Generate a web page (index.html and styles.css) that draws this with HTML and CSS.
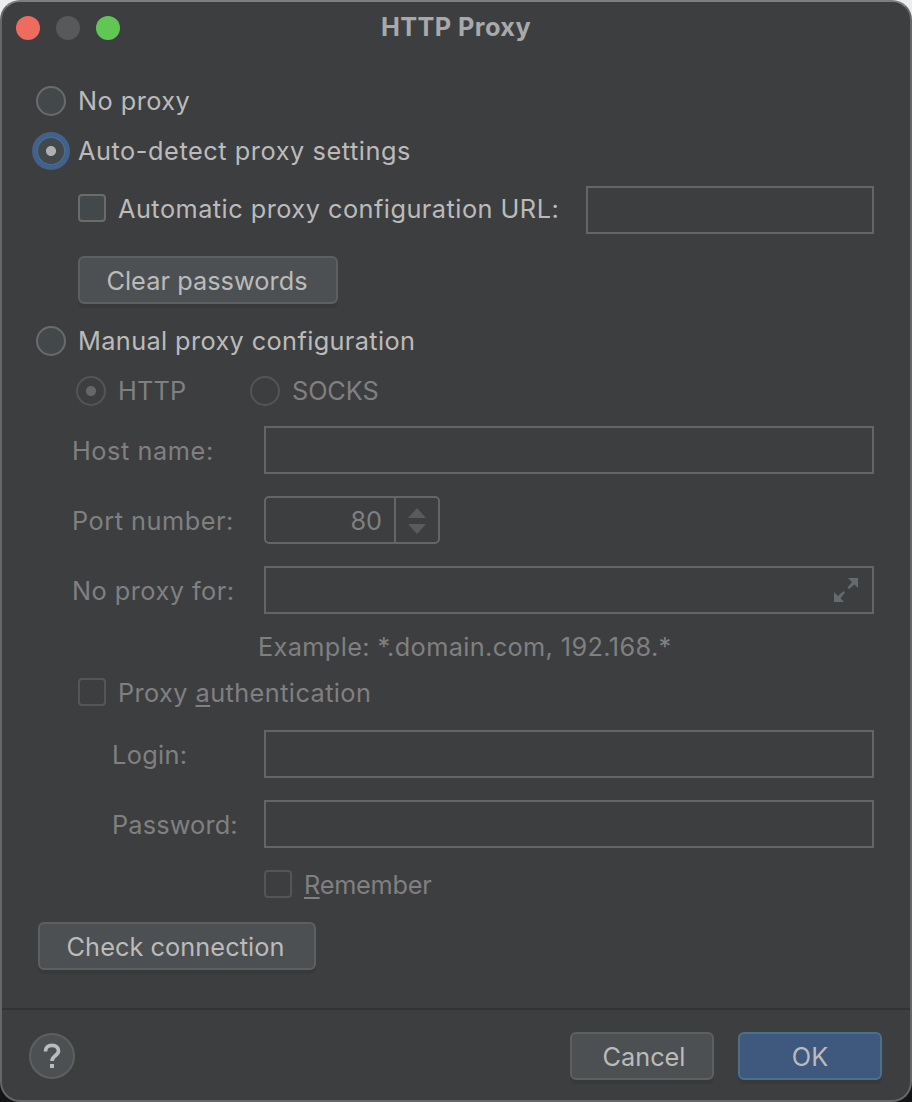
FILE: index.html
```html
<!DOCTYPE html>
<html lang="en">
<head>
<meta charset="utf-8">
<title>HTTP Proxy</title>
<link rel="stylesheet" href="styles.css">
</head>
<body>
<div class="window">
  <header class="titlebar">
    <div class="lights"><i class="light red"></i><i class="light gray"></i><i class="light green"></i></div>
    <h1 class="title">HTTP Proxy</h1>
  </header>
  <main class="content">
    <div class="row h50"><i class="radio"></i><span class="label t-none">No proxy</span></div>
    <div class="row h50"><i class="radio focused"></i><span class="label t-auto">Auto-detect proxy settings</span></div>
    <div class="row h68 indent"><i class="check"></i><span class="label grow t-url">Automatic proxy configuration URL:</span><div class="field url-field"></div></div>
    <div class="row h72 indent"><button class="button clear"><span class="t-clear">Clear passwords</span></button></div>
    <div class="row h50"><i class="radio"></i><span class="label t-manual">Manual proxy configuration</span></div>
    <div class="row h50 indent disabled">
      <div class="option http"><i class="radio selected"></i><span class="label t-http">HTTP</span></div>
      <div class="option"><i class="radio"></i><span class="label t-socks">SOCKS</span></div>
    </div>
    <div class="row h68 form disabled"><span class="label t-host">Host name:</span><div class="field"></div></div>
    <div class="row h72 form disabled"><span class="label t-port">Port number:</span>
      <div class="spinner"><span class="value">80</span><span class="arrows"><svg width="18" height="26" viewBox="0 0 18 26"><path d="M0 10L9 0L18 10ZM0 16H18L9 26Z" fill="#5b5b5c"/></svg></span></div>
    </div>
    <div class="row h68 form disabled"><span class="label t-for">No proxy for:</span>
      <div class="field expand"><svg width="24" height="24" viewBox="0 0 24 24"><path d="M14 0H24V10L20.5 6.5L15 11L13.5 9.5L18 4ZM0 14L4 18L9.500 13L11 14.500L6.500 20L10 24H0Z" fill="#656a6e"/></svg></div>
    </div>
    <div class="row h46 example disabled"><span class="label t-example">Example: *.domain.com, 192.168.*</span></div>
    <div class="row h46 indent disabled"><i class="check"></i><span class="label t-proxyauth">Proxy <u>a</u>uthentication</span></div>
    <div class="row h76 form nested disabled"><span class="label t-login">Login:</span><div class="field"></div></div>
    <div class="row h64 form nested disabled"><span class="label t-pass">Password:</span><div class="field"></div></div>
    <div class="row h56 remember disabled"><i class="check"></i><span class="label t-remember"><u>R</u>emember</span></div>
    <div class="row h68"><button class="button connection"><span class="t-check">Check connection</span></button></div>
  </main>
  <footer class="footer">
    <button class="help" aria-label="Help"><svg width="18" height="26" viewBox="0 0 18 26"><path d="M2.500 8.500C2.500 4.500 5 2.300 9 2.300S15.500 4.500 15.500 8C15.500 12.500 9 12.500 9 18" fill="none" stroke="#bbb" stroke-width="3.700"/><path d="M7 21H11V25H7Z" fill="#bbb"/></svg></button>
    <div class="actions">
      <button class="button action cancel"><span class="t-cancel">Cancel</span></button>
      <button class="button action primary"><span class="t-ok">OK</span></button>
    </div>
  </footer>
</div>
</body>
</html>
```
FILE: styles.css
```css
* { box-sizing: border-box; }
body {
  margin: 0;
  background: linear-gradient(#ededed 0 50%, #151517 50%);
  font-family: Inter, "Liberation Sans", sans-serif;
  font-size: 25.3px;
  color: #bbbbbb;
}
.window {
  width: 912px;
  height: 1102px;
  display: flex;
  flex-direction: column;
  border: 2px solid #666768;
  border-top-color: #7c7e80;
  border-radius: 20px;
  background: #3d3e40;
  overflow: hidden;
}
.titlebar {
  height: 74px;
  flex: none;
  display: grid;
  grid-template-columns: 1fr auto 1fr;
  align-items: start;
  padding: 14px 14px 0;
}
.lights { display: flex; gap: 16px; }
.light { width: 24px; height: 24px; border-radius: 50%; }
.red { background: #ee6b60; }
.gray { background: #58595b; }
.green { background: #62c655; }
.title {
  margin: 0;
  font-size: 25.3px;
  line-height: 22px;
  font-weight: 700;
  letter-spacing: 0.42px;
  color: #a8a9ab;
}
.content { flex: 1; padding: 0 36px 0 34px; }
.row { display: flex; align-items: center; }
.h46 { height: 46px; }
.h50 { height: 50px; }
.h56 { height: 56px; }
.h64 { height: 64px; }
.h68 { height: 68px; }
.h72 { height: 72px; }
.h76 { height: 76px; }
.indent { padding-left: 42px; }
.form { padding-left: 36px; }
.form .label { width: 192px; flex: none; }
.form.nested { padding-left: 76px; }
.form.nested .label { width: 152px; }
.example { padding-left: 222px; }
.remember { padding-left: 228px; }
.grow { flex: 1; }
.disabled { color: #808080; }
.label { white-space: nowrap; line-height: 32px; }
.form .label, .remember .label { padding-top: 2px; }
.label u { text-decoration-thickness: 2px; text-underline-offset: 3px; text-decoration-skip-ink: none; }
.t-none { letter-spacing: 0.45px; }
.t-auto { letter-spacing: 0.56px; }
.t-url { letter-spacing: 0.48px; padding-bottom: 2px; }
.t-clear { letter-spacing: 0.05px; margin-right: 2px; }
.t-manual { letter-spacing: 0.38px; }
.t-http { letter-spacing: 0.15px; }
.t-socks { letter-spacing: -0.1px; }
.t-host { letter-spacing: 0.57px; }
.t-port { letter-spacing: 0.52px; }
.t-for { letter-spacing: 0.48px; }
.t-example { letter-spacing: 0.37px; }
.t-proxyauth { letter-spacing: 0.42px; }
.t-login { letter-spacing: 0.35px; }
.t-pass { letter-spacing: 0.15px; }
.t-remember { letter-spacing: -0.24px; }
.t-check { letter-spacing: 0.06px; margin-right: 3px; }
.t-cancel { margin-left: 4px; }
.value { letter-spacing: 0; }
.option { display: flex; align-items: center; margin-left: -2px; }
.http { width: 174px; }
.option + .option { margin-left: 0; }
.radio {
  width: 30px;
  height: 30px;
  flex: none;
  margin-right: 12px;
  border: 2px solid #6b6b6b;
  border-radius: 50%;
  background: #43494a;
}
.focused {
  border: 2px solid #466a97;
  box-shadow: 0 0 0 4px #43618b;
  background: radial-gradient(circle, #afb0b0 4.6px, #43494a 5.4px);
}
.disabled .radio { background: none; border-color: #545556; }
.disabled .selected { background: radial-gradient(circle, #666767 4.6px, transparent 5.4px); }
.check {
  width: 28px;
  height: 28px;
  flex: none;
  margin: -4px 12px 0 0;
  border: 2px solid #6b6b6b;
  border-radius: 4px;
  background: #43494a;
}
.disabled .check { background: none; border-color: #545556; margin-top: -2px; }
.remember .check { margin-top: 0; }
.field { flex: 1; height: 48px; border: 2px solid #646566; }
.url-field { flex: none; width: 288px; }
.expand { display: flex; align-items: center; justify-content: flex-end; padding-right: 14px; }
.spinner {
  width: 176px;
  height: 48px;
  display: flex;
  border: 2px solid #646566;
  border-radius: 5px;
}
.value { width: 130px; border-right: 2px solid #646566; line-height: 46px; text-align: right; padding-right: 12px; height: 44px; }
.arrows { flex: 1; display: flex; align-items: center; justify-content: center; padding-top: 3px; }
.arrows svg { margin-bottom: 2px; }
.button {
  height: 48px;
  padding: 0;
  font: inherit;
  color: #bbbbbb;
  background: #4c5052;
  border: 2px solid #5e6060;
  border-radius: 6px;
  box-shadow: 0 4px 0 #38393b;
  white-space: nowrap;
}
.clear { width: 260px; }
.connection { width: 278px; margin-left: 2px; }
.footer {
  height: 92px;
  flex: none;
  display: flex;
  align-items: center;
  justify-content: space-between;
  padding: 2px 28px 0 27px;
  border-top: 2px solid #323334;
}
.help {
  width: 46px;
  height: 46px;
  padding: 0;
  display: grid;
  place-items: center;
  background: #4c5052;
  border: 2px solid #5e6060;
  border-radius: 50%;
}
.actions { display: flex; gap: 24px; }
.action { width: 144px; }
.primary { background: #3e587e; border-color: #4c708c; }
```
